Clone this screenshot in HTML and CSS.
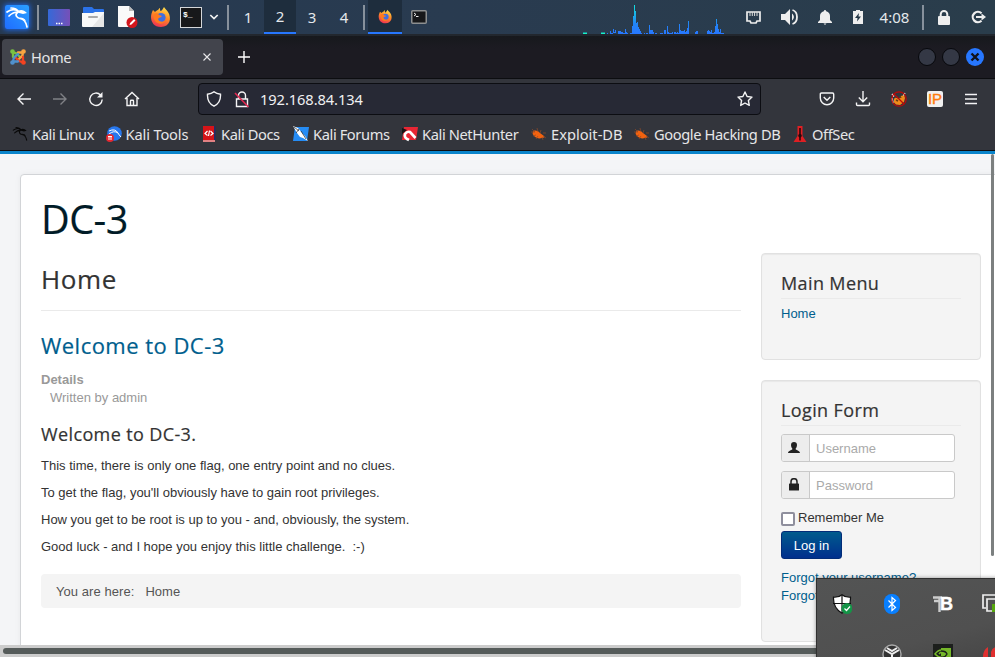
FILE: index.html
```html
<!DOCTYPE html>
<html lang="en">
<head>
<meta charset="utf-8">
<title>Home</title>
<link rel="stylesheet" href="styles.css">
</head>
<body>
<svg class="defs" width="0" height="0" aria-hidden="true">
  <defs>
    <linearGradient id="gFox" x1="0.7" y1="0" x2="0.3" y2="1"><stop offset="0" stop-color="#ffe14d"/><stop offset=".45" stop-color="#ff8a25"/><stop offset="1" stop-color="#ef2f55"/></linearGradient>
    <linearGradient id="gDesk" x1="0" y1="0" x2="1" y2="0"><stop offset="0" stop-color="#3569d8"/><stop offset="1" stop-color="#7650b8"/></linearGradient>
    <linearGradient id="gGraph" gradientUnits="userSpaceOnUse" x1="0" y1="12" x2="0" y2="102"><stop offset="0" stop-color="#12e6dc"/><stop offset=".65" stop-color="#2285f5"/><stop offset="1" stop-color="#2777ff"/></linearGradient>
  </defs>
  <symbol id="fox" viewBox="0 0 22 22"><path d="M14 1c1 2 3 3 4 5 4 6 2 15-7 15C4 21 1 16 1 11c0-3 1-5 2-7l2 2c1-1 2-2 3-2 1-1 1-2 2-2 0 2 0 3 1 3 1-1 2-2 3-4z" fill="url(#gFox)"/><circle cx="11" cy="11.5" r="4.6" fill="#3f6fe0"/><path d="M4 8c2-1 4-1 5 1l3 1c-1 2-3 1-4 3 1 3 5 4 8 1-2 5-10 5-12-1-.6-2-.5-4 0-5z" fill="#ff7a1f"/></symbol>
  <symbol id="bug" viewBox="0 0 16 14"><path d="M2 5c1-2 4-2 7 1l4 3c1 1 0 2-2 2-3 1-6 0-8-2-1-1-2-3-1-4z" fill="#f3620f"/><path d="M1 2l3 3M0 5h4M6 1l1 4M10 3l-1 3M12 6h3M2 9l3-1M5 12l2-3M12 13l-1-3M15 11l-3-2" stroke="#8f4b2a" stroke-width=".7" fill="none"/></symbol>
  <symbol id="dragon" viewBox="0 0 24 24"><path d="M2 7c4-3 8-3 11-1M4 11c3-3 6-4 9-4M6 3c4 0 6 1 8 4M13 7c-4 3-1 6 2 6.500 4 .5 6 3 7 8.500" fill="none" stroke="currentColor" stroke-width="1.700" stroke-linecap="round"/><path d="M13 6c3-2 6-1 9 2l-4 1-4-1zM15 12.500c3 0 5 1 6 4-2-2-4-2.500-6-2.500z" fill="currentColor"/></symbol>
</svg>

<header class="panel">
  <div class="slot w34"><span class="kali"><svg width="24" height="24"><use href="#dragon"/></svg></span></div>
  <div class="slot w8"><i class="sep"></i></div>
  <div class="slot w34"><svg width="22" height="17" viewBox="0 0 22 17"><rect width="22" height="17" rx="1" fill="url(#gDesk)"/><path d="M8 14.500h1.500M10.500 14.500h1.500M13 14.500h1.500" stroke="#fff" stroke-width="1.500"/></svg></div>
  <div class="slot w34"><svg width="22" height="20" viewBox="0 0 22 20"><path d="M1 1q0-1 1-1h8l2 2h9q1 0 1 1v5H1z" fill="#2b72e8"/><path d="M0 6h11l2-1h9v14q0 1-1 1H1q-1 0-1-1z" fill="#f8f8f8"/><path d="M22 6v14H10z" fill="#e6e6e6"/><rect x="6" y="9" width="10" height="2" rx="1" fill="#aaa"/></svg></div>
  <div class="slot w34"><svg width="22" height="22" viewBox="0 0 22 22"><path d="M2 0h11l5 5v16H3q-1 0-1-1z" fill="#fafafa"/><path d="M13 0l5 5h-5z" fill="#bbb"/><circle cx="16" cy="16.500" r="5.500" fill="#d3161d"/><path d="M13.500 19l.6-2 4-4 1.400 1.400-4 4z" fill="#fff"/></svg></div>
  <div class="slot w34"><svg width="22" height="22"><use href="#fox"/></svg></div>
  <div class="slot w26"><span class="term">$_</span></div>
  <div class="slot w20"><svg width="10" height="6" viewBox="0 0 10 6"><path d="M1.300 1L5 4.600 8.700 1" fill="none" stroke="#f2f2f2" stroke-width="1.700"/></svg></div>
  <div class="slot w8"><i class="sep"></i></div>
  <div class="slot ws">1</div><div class="slot ws active">2</div><div class="slot ws">3</div><div class="slot ws">4</div>
  <div class="slot w8"><i class="sep"></i></div>
  <div class="slot w34 active"><svg width="15" height="15"><use href="#fox"/></svg></div>
  <div class="slot w34"><svg width="16" height="14" viewBox="0 0 16 14"><rect x=".75" y=".75" width="14.500" height="12.500" rx="1" fill="#17181a" stroke="#8d8f90" stroke-width="1.500"/><path d="M3 3l2 1.500L3 6M5 6.500h2.500" stroke="#eee" fill="none"/></svg></div>
  <svg class="graph" width="141" height="34" viewBox="39 0 423 102" shape-rendering="crispEdges">
    <path fill="#1e8d91" d="M39 96h12v3H39zM93 96h12v3H93z"/><path fill="#17f3c6" d="M39 99h12v3H39zM93 99h12v3H93z"/>
    <path fill="url(#gGraph)" d="M111 102v-3h3v3zM120 102v-9h3v6h6v-12h3v9h3v-6h3v9zM144 102v-9h9v3h6v3h6v-12h3v9h3v3h3v3zM180 102v-3h6v-21h3v-30h3v-33h3v18h3v36h3v-3h3v15h3v6h3v6h3v6h3v3zM222 102v-3h3v3zM228 102v-3h6v3zM237 102v-27h3v15h9v6h3v6zM255 102v-3h6v3zM270 102v-3h9v3zM282 102v-12h6v12zM291 102v-24h3v18h3v3h9v-3h3v6zM312 102v-6h6v3h3v-3h3v3h3v-27h3v18h3v3h9v-3h3v6h3v-3h3v-9h3v-21h3v39h3v3h6v3h3v-3h3v-3h3v-6h3v-3h6v12h3v-3h3v6h3v3h3v6zM411 102v-9h3v-3h3v3h3v3h3v-6h3v9h6v-3h3v-18h3v-21h3v15h3v15h3v9h3v-9h3v12h9v3z"/>
  </svg>
  <div class="slot w35"><svg width="15" height="13" viewBox="0 0 15 13"><path d="M1 1h13v9h-3l-1 2H5l-1-2H1z" fill="none" stroke="#eee" stroke-width="1.700"/><path d="M4 1v4M6.300 1v4M8.600 1v4M11 1v4" stroke="#ddd"/></svg></div>
  <div class="slot w37"><svg width="18" height="16" viewBox="0 0 18 16"><path d="M0 5h4l5-5v16l-5-5H0z" fill="#eee"/><path d="M11 4.500c2.500 2 2.500 5 0 7z" fill="#eee"/><path d="M11.500 1c6 2 6 12 0 14" fill="none" stroke="#eee" stroke-width="1.800"/></svg></div>
  <div class="slot w33"><svg width="14" height="15" viewBox="0 0 14 15"><path d="M7 0q1 0 1.200 1.200C11 2 12 4 12 6v4l2 2v1H0v-1l2-2V6c0-2 1-4 3.800-4.800Q6 0 7 0z" fill="#eee"/><path d="M5.500 13.500h3L7 15z" fill="#eee"/></svg></div>
  <div class="slot w34"><svg width="10" height="14" viewBox="0 0 10 14"><path d="M0 1h3V0h4v1h3v13H0z" fill="#eee"/><path d="M6 3L2 8h2.500L4 11.500l4-5H5.500z" fill="#243746"/></svg></div>
  <div class="slot clock">4:08</div>
  <div class="slot w18"><i class="sep"></i></div>
  <div class="slot w24"><svg width="12" height="15" viewBox="0 0 12 15"><rect y="6" width="12" height="9" rx="1" fill="#eee"/><path d="M2.700 7V4.300a3.300 3.300 0 0 1 6.600 0V7" fill="none" stroke="#eee" stroke-width="2"/></svg></div>
  <div class="slot logout"><svg width="15" height="14" viewBox="0 0 15 14"><path d="M10.500 3.200A5.200 5.200 0 1 0 10.500 10.800" fill="none" stroke="#eee" stroke-width="2.200"/><path d="M5 7h6" stroke="#eee" stroke-width="2"/><path d="M10.500 3.500L15 7l-4.500 3.500z" fill="#eee"/></svg></div>
</header>

<div class="tabs">
  <div class="tab">
    <svg width="16" height="16" viewBox="0 0 16 16" fill="none" stroke-width="2.300" stroke-linecap="round"><path d="M3 8V4q3-1 5 2l2 2" stroke="#7ac143"/><path d="M8 3.500h4.500q1 3-2 5l-2 2" stroke="#f9a541"/><path d="M13 8v5q-3 0-5-2L6 9" stroke="#f44321"/><path d="M8 12.500H3q0-3 2-5l3-2.500" stroke="#5091cd"/><circle cx="2.500" cy="2.500" r="1.200" stroke="#7ac143"/><circle cx="13.500" cy="2.500" r="1.200" stroke="#f9a541"/><circle cx="13.500" cy="13.500" r="1.200" stroke="#f44321"/><circle cx="2.500" cy="13.500" r="1.200" stroke="#5091cd"/></svg>
    <span class="tab-title">Home</span>
    <svg width="8" height="8" viewBox="0 0 8 8"><path d="M.5.5l7 7M7.500.5l-7 7" stroke="#e8e8ea" stroke-width="1.100"/></svg>
  </div>
  <svg class="plus" width="12" height="12" viewBox="0 0 12 12"><path d="M6 0v12M0 6h12" stroke="#fff" stroke-width="1.400"/></svg>
  <div class="window-buttons"><i class="dot"></i><i class="dot"></i><svg class="close" width="18" height="18" viewBox="0 0 18 18"><circle cx="9" cy="9" r="9" fill="#2777ff"/><path d="M5.500 5.500l7 7M12.500 5.500l-7 7" stroke="#10131c" stroke-width="2.400"/></svg></div>
</div>

<div class="toolbar">
  <div class="nav">
    <svg width="16" height="16" viewBox="0 0 16 16"><path d="M15 8H2M7.500 2.500L2 8l5.500 5.500"/></svg>
    <svg class="dim" width="16" height="16" viewBox="0 0 16 16"><path d="M1 8h13M8.500 2.500L14 8l-5.500 5.500"/></svg>
    <svg width="16" height="16" viewBox="0 0 16 16"><path d="M12.500 4A6.200 6.200 0 1 0 14.200 8.500"/><path d="M14.500 1v5.500H9z" fill="#f4f4f5" stroke="none"/></svg>
    <svg width="16" height="16" viewBox="0 0 16 16"><path d="M1 8l7-6.500L15 8M3 7v7.500h10V7M6.500 14.500V10q0-.7.700-.7h1.600q.7 0 .7.700v4.500"/></svg>
  </div>
  <div class="url">
    <svg width="16" height="16" viewBox="0 0 16 16"><path d="M8 .8Q10.500 3 14.500 3.200q.5 8.800-6.500 12Q1 12 1.500 3.200 5.500 3 8 .8z"/></svg>
    <svg class="lock" width="16" height="17" viewBox="0 0 16 17"><path d="M2.500 8h11v7.500h-11zM4.500 8V4.500a3.500 3.500 0 0 1 7 0V8"/><path d="M1 2l13.500 14" stroke="#e22850" stroke-width="1.600"/></svg>
    <span class="address">192.168.84.134</span>
    <svg width="16" height="16" viewBox="0 0 16 16"><path d="M8 1l2.100 4.500 4.900.6-3.600 3.400.9 4.900L8 12l-4.300 2.400.9-4.900L1 6.100l4.900-.6z" stroke-linejoin="round"/></svg>
  </div>
  <div class="actions">
    <svg width="16" height="16" viewBox="0 0 16 16"><path d="M2.500 2h11q1.200 0 1.200 1.200V7a6.700 6.700 0 0 1-13.400 0V3.200Q1.300 2 2.500 2zM4.700 6L8 9.200 11.300 6"/></svg>
    <svg width="16" height="16" viewBox="0 0 16 16"><path d="M8 0v10.500M3.800 6.500L8 10.700l4.200-4.200M1.500 11.500v2q0 1 1 1h11q1 0 1-1v-2"/></svg>
    <svg width="16" height="16" viewBox="0 0 16 16"><path d="M3 8q1-2 3-1l2 1 2-3 3-1 1 3-1 4-4 3-4-.5-2-2z" fill="#f08a1a" stroke="none"/><path d="M1 3l2 2.500M1 7l1 5M14 2l-1.500 2.500" stroke="#eee"/><circle cx="8" cy="8" r="7.200" stroke="#bd0808" stroke-width="1.200"/><path d="M3 3l10 10" stroke="#bd0808" stroke-width="1.300"/><path d="M9 5l1 2M5 9l2 1" stroke="#6b3a10"/></svg>
    <span class="ip">IP</span>
    <svg width="16" height="16" viewBox="0 0 16 16"><path d="M2 3.500h12M2 8h12M2 12.500h12"/></svg>
  </div>
</div>

<nav class="bookmarks">
  <span class="bm b1"><svg class="black" width="17" height="17"><use href="#dragon"/></svg>Kali Linux</span>
  <span class="bm b2"><svg width="16" height="16" viewBox="0 0 16 16"><circle cx="8.500" cy="7.500" r="7.300" fill="#2777ee"/><path d="M3 5q6-3 9 2M3 8q5-4 9-1 1 2 3 4" stroke="#fff" fill="none"/><circle cx="4" cy="12" r="4" fill="#e52830"/><path d="M2 10.500h4M3 10.500v3.500M5 10.500v3.500" stroke="#fff"/></svg>Kali Tools</span>
  <span class="bm b3"><svg width="16" height="16" viewBox="0 0 16 16"><path d="M2 0h12v16H2z" fill="#d61418"/><path d="M13 0h1.500v14H13z" fill="#252a68"/><path d="M2 15h12" stroke="#eee"/><path d="M6.500 5L4 7.500l2.500 2M9.500 5L12 7.500l-2.500 2M8.500 4.500l-1 5.500" stroke="#fff" stroke-width="1.200" fill="none"/></svg>Kali Docs</span>
  <span class="bm b4"><svg width="16" height="16" viewBox="0 0 16 16"><path d="M2 1h14L14 15H0z" fill="#258cf5"/><path d="M0 0l5 2 5 6 2 2 3 5-5-3-3-1-3-4z" fill="#fff"/><path d="M1 1l5 4M6 3l-3 4M8 5l5 8" stroke="#222" stroke-width=".7"/></svg>Kali Forums</span>
  <span class="bm b5"><svg width="16" height="16" viewBox="0 0 16 16"><path d="M2 1h14l-2 13H0z" fill="#e82634"/><path d="M0 2l5 2-5 4z" fill="#151515"/><path d="M13.500 12L8 6q-3-1-5 2-1 3 2 5l2 1" stroke="#fff" stroke-width="2.600" fill="none"/></svg>Kali NetHunter</span>
  <span class="bm b6"><svg width="16" height="14"><use href="#bug"/></svg>Exploit-DB</span>
  <span class="bm b7"><svg width="16" height="14"><use href="#bug"/></svg>Google Hacking DB</span>
  <span class="bm b8"><svg width="14" height="16" viewBox="0 0 14 16"><path d="M4.500 0h5v10l4 6H.5l4-6z" fill="#df1f23"/><path d="M6.200 2h1.600v6q2 1.500 0 3.500v3H6.200v-3q-2-2 0-3.500z" fill="#270a0b"/></svg>OffSec</span>
</nav>

<main class="page">
  <div class="container">
    <h1>DC-3</h1>
    <div class="columns">
      <section class="content">
        <h2 class="page-title">Home</h2>
        <h2 class="article-title">Welcome to DC-3</h2>
        <dl><dt>Details</dt><dd>Written by admin</dd></dl>
        <h3>Welcome to DC-3.</h3>
        <p>This time, there is only one flag, one entry point and no clues.</p>
        <p>To get the flag, you'll obviously have to gain root privileges.</p>
        <p>How you get to be root is up to you - and, obviously, the system.</p>
        <p>Good luck - and I hope you enjoy this little challenge.&nbsp; :-)</p>
        <div class="crumbs"><span>You are here:</span><span>Home</span></div>
      </section>
      <aside>
        <div class="well menu"><h3>Main Menu</h3><a>Home</a></div>
        <div class="well login">
          <h3>Login Form</h3>
          <div class="field"><span class="addon"><svg width="12" height="12" viewBox="0 0 12 12"><path d="M6 0c2 0 3 1 3 3S8 6 7.500 7c0 1 4.500 1.500 4.500 4H0C0 8.500 4.500 8 4.500 7 4 6 3 5 3 3s1-3 3-3z" fill="#222"/></svg></span><span class="input">Username</span></div>
          <div class="field"><span class="addon"><svg width="10" height="13" viewBox="0 0 10 13"><rect y="5.500" width="10" height="7" rx=".6" fill="#222"/><path d="M2 6V3.700a3 3 0 0 1 6 0V6" fill="none" stroke="#222" stroke-width="1.500"/></svg></span><span class="input">Password</span></div>
          <div class="remember"><i class="check"></i>Remember Me</div>
          <span class="button">Log in</span>
          <div class="links"><a>Forgot your username?</a><a>Forgot your password?</a></div>
        </div>
      </aside>
    </div>
  </div>
  <i class="vbar"></i>
  <div class="hbar"><i></i></div>
</main>

<div class="tray">
  <span></span>
  <svg width="20" height="20" viewBox="0 0 20 20"><path d="M10 .7q3 2.800 8.500 2.500.5 11-8.500 16-9-5-8.500-16Q7 3.500 10 .7z" fill="#fff" stroke="#111" stroke-width="1.200"/><path d="M10 1v18M1 9.500h18" stroke="#111" stroke-width="1.200"/><circle cx="15" cy="14.500" r="5.500" fill="#149447"/><path d="M12.500 14.500l2 2 3.500-4" fill="none" stroke="#fff" stroke-width="1.200"/></svg>
  <svg width="16" height="20" viewBox="0 0 16 20"><rect width="16" height="20" rx="7.500" fill="#087fff"/><path d="M4.500 6.500l7 7L8 16.500v-13l3.500 3-7 7" fill="none" stroke="#fff" stroke-width="1.200"/></svg>
  <div class="tb"><svg width="9" height="16" viewBox="0 0 9 16"><path d="M0 1.500h9M1 5h5M6.500 2v14" stroke="#ccc" stroke-width="2.400" fill="none"/></svg><b>B</b></div>
  <svg class="screens" width="20" height="20" viewBox="0 0 20 20"><path d="M14 1H2v13h3M18 5H6v12h5" fill="none" stroke="#eee" stroke-width="1.700"/><path d="M11 10h9v8h-9z" fill="#57a80e"/></svg>
  <span></span><span></span>
  <svg width="20" height="20" viewBox="0 0 20 20"><circle cx="10" cy="10" r="9" fill="#333" stroke="#aaa" stroke-width="1.400"/><path d="M3 6l7 4 7-4M10 10v8M5 4l5 3 5-3" fill="none" stroke="#eee" stroke-width="2"/></svg>
  <svg width="20" height="20" viewBox="0 0 20 20"><path d="M0 0h20v20H0z" fill="#1c1f1c"/><path d="M8 4h10v13H8z" fill="#76b82a"/><path d="M2 10q6-8 14 0-7 7-14 0zM6 10q3-4 6 0" fill="none" stroke="#76b82a" stroke-width="1.500"/><path d="M8 7q5 0 6 3-2 4-6 3" fill="none" stroke="#1c1f1c" stroke-width="1.300"/></svg>
  <svg class="screens" width="20" height="20" viewBox="0 0 20 20"><path d="M2 13q0-7 5-10v17H2zM10 20V8q1-4 5-5v17z" fill="#e0302f"/></svg>
</div>
</body>
</html>
```
FILE: styles.css
```css
* { box-sizing: border-box; }
html, body { margin: 0; height: 657px; overflow: hidden; }
body { display: flex; flex-direction: column; position: relative; background: #f4f5f7; font: 13px/18px "Liberation Sans", sans-serif; color: #333; }
svg { display: block; flex: none; }
.defs { position: absolute; }

.panel { display: flex; flex: none; height: 36px; background: linear-gradient(90deg, #263950, #293b50 45%, #2a3d4b); border-bottom: 2px solid #22272e; font: 15px/34px "Noto Sans", sans-serif; color: #e4e8eb; }
.slot { display: flex; flex: none; align-items: center; justify-content: center; height: 34px; }
.w8 { width: 8px; } .w18 { width: 18px; } .w20 { width: 20px; } .w24 { width: 24px; } .w26 { width: 26px; }
.w33 { width: 33px; } .w34 { width: 34px; } .w35 { width: 35px; } .w37 { width: 37px; }
.sep { width: 2px; height: 25px; background: #87919c; }
.ws { width: 32px; }
.active { background: #1e2d3d; border-bottom: 2px solid #2777ff; }
.kali { width: 24px; height: 24px; border-radius: 2px; background: linear-gradient(45deg, #1f6dff, #2aa0ff); box-shadow: 0 0 5px 1px #1f66e0; color: #fff; }
.term { width: 22px; height: 21px; border: 1px solid #d5d7d9; background: #17181a; color: #fff; font: bold 8px/13px "Liberation Mono", monospace; padding-left: 2px; }
.graph { margin-left: auto; margin-right: 12px; }
.clock { width: 39px; }
.logout { width: 39px; padding-left: 6px; }

.tabs { display: flex; flex: none; align-items: center; height: 43px; padding: 0 11px 0 2px; background: linear-gradient(#17191d, #1c1b22 30%); border-bottom: 1px solid #0c0d10; }
.tab { display: flex; align-items: center; width: 221px; height: 36px; padding: 0 12px 0 8px; border-radius: 4px; background: #42444c; color: #e6e6e8; font: 14.67px/20px "Noto Sans", sans-serif; letter-spacing: -.4px; }
.tab-title { flex: 1; margin-left: 5px; }
.plus { margin-left: 15px; }
.window-buttons { display: flex; align-items: center; gap: 6px; margin-left: auto; }
.dot { width: 18px; height: 18px; border: 1px solid #07080c; border-radius: 50%; background: #343845; }

.toolbar { display: flex; flex: none; align-items: center; height: 40px; padding: 0 16px; background: #33353c; }
.toolbar svg { fill: none; stroke: #f4f4f5; stroke-width: 1.4; }
.nav { display: flex; gap: 20px; width: 182px; }
.nav .dim { opacity: .4; }
.url { display: flex; align-items: center; width: 563px; height: 32px; padding: 0 7px; border: 1px solid #0c0d12; border-radius: 4px; background: #272935; color: #f0f0f2; font: 14.67px/20px "Noto Sans", sans-serif; letter-spacing: -.08px; }
.url .lock { margin-left: 12px; }
.address { flex: 1; margin-left: 10px; }
.actions { display: flex; align-items: center; gap: 20px; margin-left: auto; }
.ip { width: 16px; height: 16px; border-radius: 2px; background: #f1f1f1; color: #ff7a0c; font: 15px/16px "Liberation Sans", sans-serif; text-align: center; -webkit-text-stroke: .4px #ff7a0c; }

.bookmarks { display: flex; flex: none; align-items: center; height: 35px; padding: 0 0 3px 12px; background: #33353c; border-bottom: 3px solid #0a84ca; color: #e6e6e8; font: 14.67px/20px "Noto Sans", sans-serif; letter-spacing: -.4px; box-shadow: inset 0 -1px #0c0d10; }
.bm { display: flex; align-items: center; gap: 4px; white-space: nowrap; }
.bm svg { width: 16px; }
.black { color: #090909; }
.b1 { width: 93.5px; } .b2 { width: 95.5px; letter-spacing: -.15px; } .b3 { width: 92px; } .b4 { width: 109px; }
.b5 { width: 129px; } .b6 { width: 103px; letter-spacing: 0; } .b7 { width: 158px; }

.page { display: flex; flex: 1; position: relative; overflow: hidden; padding: 20px 0 0 20px; }
.container { flex: none; width: 1000px; height: 520px; padding: 20px; border: 1px solid #d2d4d7; border-radius: 4px; background: #fff; box-shadow: 0 0 6px rgba(0,0,0,.05); }
h1, h2, h3 { margin: 0; font-family: "Open Sans", sans-serif; font-weight: 400; -webkit-text-stroke: .2px currentColor; }
h1 { height: 58px; color: #001b27; font-size: 39.5px; line-height: 48px; letter-spacing: -.5px; }
.columns { display: flex; gap: 20px; }
.content { width: 700px; }
.page-title { height: 58px; padding-top: 8px; border-bottom: 1px solid #eaeaea; font-size: 26px; line-height: 36px; letter-spacing: .6px; }
.article-title { margin-top: 17px; color: #005e8d; font-size: 22px; line-height: 34px; letter-spacing: .47px; }
dl { margin: 9px 0 0; color: #999; }
dt { font-weight: 700; }
dd { margin: 0 0 0 9px; }
.content h3 { margin: 15px 0 11px; font-size: 18px; line-height: 24px; letter-spacing: .38px; }
p { margin: 0 0 9px; }
.crumbs { display: flex; gap: 11px; margin-top: 18px; padding: 9px 15px 7px; height: 34px; border-radius: 4px; background: #f4f4f4; color: #555; letter-spacing: .06px; }
aside { display: flex; flex-direction: column; gap: 20px; width: 220px; }
.well { padding: 17px 19px; border: 1px solid #e1e1e1; border-radius: 4px; background: #f4f4f4; box-shadow: inset 0 1px 1px rgba(0,0,0,.05); }
.menu { height: 107px; } .login { height: 262px; }
.well h3 { height: 28px; margin-bottom: 6px; border-bottom: 1px solid #eaeaea; font-size: 18px; line-height: 24px; letter-spacing: .38px; }
a { display: block; color: #005e8d; }
.login h3 { margin-bottom: 8px; }
.field { display: flex; width: 174px; height: 28px; margin-bottom: 9px; border: 1px solid #c9c9c9; border-radius: 3px; background: #fff; line-height: 27px; color: #aaa; overflow: hidden; }
.addon { display: flex; align-items: center; justify-content: center; width: 28px; padding-right: 3px; padding-bottom: 1px; border-right: 1px solid #c9c9c9; background: #ededed; }
.input { padding-left: 6px; }
.remember { display: flex; gap: 3px; height: 23px; padding-top: 1px; }
.check { width: 14px; height: 14px; margin-top: 3px; border: 2px solid #8f8f9d; border-radius: 2px; background: #fff; }
.button { display: block; width: 61px; height: 28px; border: 1px solid #022c78; border-radius: 3px; background: linear-gradient(#005b8d, #002f8d); color: #fff; line-height: 27px; text-align: center; }
.links { margin-top: 10px; }
.vbar { position: absolute; top: 0; right: 1px; width: 3px; height: 402px; border-radius: 2px; background: #7c8080; }
.hbar { position: absolute; left: 0; right: 0; bottom: 0; height: 12px; padding: 3px 3px; background: #ccc; }
.hbar i { display: block; height: 6px; border-radius: 3px; background: #555b5a; }

.tray { position: absolute; left: 816px; top: 578px; width: 200px; height: 98px; display: grid; grid-template-columns: 0 50px 50px 52px 50px; grid-auto-rows: 50px; place-items: center; border: 1px solid #303030; background: linear-gradient(165deg, #535454, #505050 60%, #414141); box-shadow: 0 0 4px rgba(0,0,0,.4); }
.tray .screens { margin-right: 6px; }
.tb { display: flex; align-items: center; color: #fff; }
.tb b { margin-left: -2px; font: bold 18px/20px "Liberation Sans", sans-serif; -webkit-text-stroke: .5px #fff; }
```
